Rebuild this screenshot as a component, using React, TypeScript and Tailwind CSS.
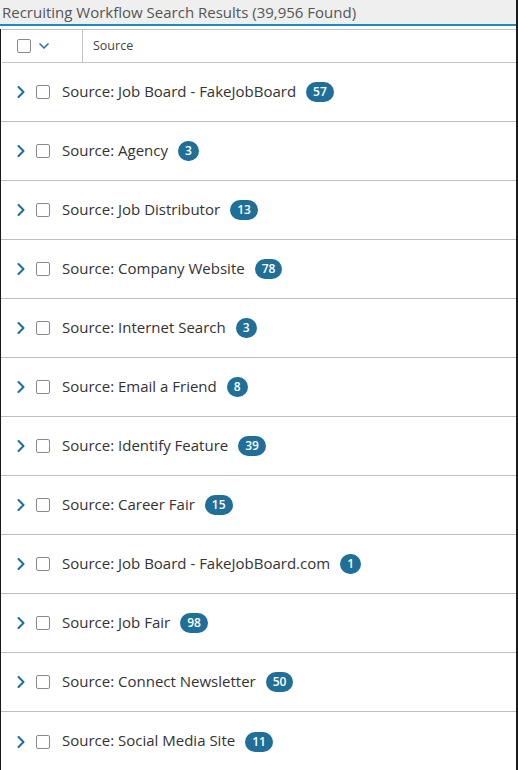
import { ChevronRight, ChevronDown } from 'lucide-react';

const ROWS: { label: string; count: number }[] = [
  { label: 'Job Board - FakeJobBoard', count: 57 },
  { label: 'Agency', count: 3 },
  { label: 'Job Distributor', count: 13 },
  { label: 'Company Website', count: 78 },
  { label: 'Internet Search', count: 3 },
  { label: 'Email a Friend', count: 8 },
  { label: 'Identify Feature', count: 39 },
  { label: 'Career Fair', count: 15 },
  { label: 'Job Board - FakeJobBoard.com', count: 1 },
  { label: 'Job Fair', count: 98 },
  { label: 'Connect Newsletter', count: 50 },
  { label: 'Social Media Site', count: 11 },
];

export default function App() {
  return (
    <div className="w-[518px] h-[770px] overflow-hidden bg-white border-r-2 border-[#1a1a1a] font-['Open_Sans',sans-serif] flex flex-col">
      {/* title bar */}
      <div className="h-[26px] bg-[#efefef] border-b-2 border-[#1a8bc4] pl-[2px] flex items-center text-[15px] text-[#555] leading-none shrink-0">
        Recruiting Workflow Search Results (39,956 Found)
      </div>

      <div className="mt-[3px] flex-1 flex flex-col border-l border-b-2 border-[#1a1a1a]">
        {/* column header */}
        <div className="h-[34px] flex border-t border-b border-[#c4c4c4] ml-px shrink-0">
          <div className="w-[81px] flex items-center pl-[15px] gap-[5px] border-r border-[#c4c4c4]">
            <span className="w-[14px] h-[14px] rounded-[2px] border border-[#8a8a8a] bg-white" />
            <ChevronDown size={16} strokeWidth={2.5} className="text-[#2a7aa5]" />
          </div>
          <div className="flex items-center pl-[10px] text-[12.5px] text-[#444]">Source</div>
        </div>

        {/* rows */}
        {ROWS.map((r, i) => (
          <div
            key={i}
            className={`h-[59px] flex items-center shrink-0 ${i < ROWS.length - 1 ? 'border-b border-[#bdbdbd]' : ''}`}
          >
            <ChevronRight size={20} strokeWidth={2.5} className="text-[#1f6f99] ml-[10px]" />
            <span className="ml-[5px] w-[14px] h-[14px] rounded-[2px] border border-[#8a8a8a] bg-white" />
            <span className="ml-[12px] -mt-[2px] text-[15px] text-[#333]">Source: {r.label}</span>
            <span className="ml-[10px] h-[20px] min-w-[20px] px-[7px] rounded-full bg-[#1f6f99] text-white text-[12px] font-semibold flex items-center justify-center leading-none">
              {r.count}
            </span>
          </div>
        ))}
      </div>
    </div>
  );
}
